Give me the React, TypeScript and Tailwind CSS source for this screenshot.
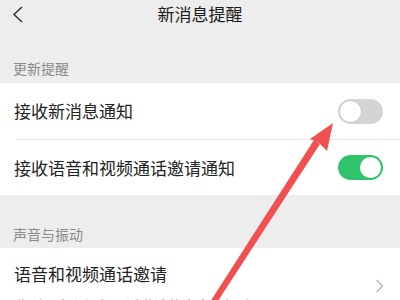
import React from "react";

const font = { fontFamily: '"Noto Sans CJK SC", "Noto Sans", sans-serif' };

function Toggle({ on }: { on: boolean }) {
  return (
    <div
      className={
        on
          ? "relative h-[25px] w-[45px] rounded-full bg-[#2fc46c]"
          : "relative h-[25px] w-[45px] rounded-full bg-[#d4d4d4]"
      }
    >
      <div
        className={
          on
            ? "absolute right-[2px] top-[2px] h-[21px] w-[21px] rounded-full bg-white"
            : "absolute left-[1px] top-[1px] h-[23px] w-[23px] rounded-full border border-[#c8c8c8] bg-white"
        }
      />
    </div>
  );
}

export default function App() {
  return (
    <div className="relative h-[300px] w-[400px] overflow-hidden bg-[#ededed]" style={font}>
      <div className="relative flex h-[28px] items-center justify-center">
        <svg className="absolute left-[12px] top-[6px]" width="12" height="18" viewBox="0 0 12 18">
          <path d="M10 1 L2 8.5 L10 16" fill="none" stroke="#333" strokeWidth="1.5" />
        </svg>
        <span className="text-[17px] leading-[24px] text-[#1b1b1b]">新消息提醒</span>
      </div>

      <div className="flex h-[55px] items-end px-[13px] pb-[5px]">
        <span className="text-[14px] leading-[20px] text-[#8a8a8a]">更新提醒</span>
      </div>

      <div className="bg-white">
        <div className="flex h-[56px] items-center justify-between pl-[14px] pr-[17px]">
          <span className="text-[17px] leading-[24px] text-[#222]">接收新消息通知</span>
          <Toggle on={false} />
        </div>
        <div className="ml-[16px] h-px bg-[#e6e6e6]" />
        <div className="flex h-[55px] items-center justify-between pl-[14px] pr-[17px]">
          <span className="text-[17px] leading-[24px] text-[#222]">接收语音和视频通话邀请通知</span>
          <Toggle on={true} />
        </div>
      </div>

      <div className="flex h-[53px] items-end px-[13px] pb-[4px]">
        <span className="text-[14px] leading-[20px] text-[#8a8a8a]">声音与振动</span>
      </div>

      <div className="flex items-center justify-between bg-white pl-[14px] pr-[16px]">
        <div className="flex flex-col pt-[14px] pb-[9px]">
          <span className="text-[17px] leading-[24px] text-[#222]">语音和视频通话邀请</span>
          <span className="mt-[9px] text-[14px] leading-[20px] text-[#999]">收到语音和视频通话邀请的声音与振动</span>
        </div>
        <svg width="9" height="14" viewBox="0 0 9 14">
          <path d="M1.5 1 L7.5 7 L1.5 13" fill="none" stroke="#b8b8b8" strokeWidth="1.4" />
        </svg>
      </div>

      <svg className="pointer-events-none absolute left-0 top-0" width="400" height="300" viewBox="0 0 400 300">
        <path d="M210 302 L216 304 L320 144 L314 140 Z" fill="#f05050" />
        <path d="M333 123 L327 151 L319 143 L310 139 Z" fill="#f05050" />
      </svg>
    </div>
  );
}
